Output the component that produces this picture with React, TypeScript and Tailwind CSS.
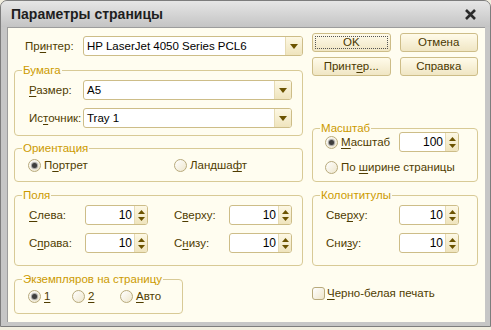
import type { ReactNode } from "react";

const font = { fontFamily: '"Liberation Sans", Arial, sans-serif' };

const U = ({ children }: { children: ReactNode }) => <span className="underline underline-offset-[2px]">{children}</span>;

const Group = ({
  title,
  className,
  inner,
  children,
}: {
  title: string;
  className: string;
  inner: string;
  children: ReactNode;
}) => (
  <fieldset className={`m-0 rounded-[4px] border border-[#d8ca96] p-0 ${className}`}>
    <legend className="ml-[7px] px-[1px] text-[11.5px] leading-[13px] text-[#cc9a00]">{title}</legend>
    <div className={inner}>{children}</div>
  </fieldset>
);

const Combo = ({ value, className }: { value: string; className: string }) => (
  <div className={`flex h-[20px] overflow-hidden rounded-[3px] border border-[#cdbd88] bg-white ${className}`}>
    <div className="flex-1 truncate pl-[3px] text-[11.5px] leading-[18px] text-black">{value}</div>
    <div className="flex w-[17px] items-center justify-center border-l border-[#e6dbb4] bg-gradient-to-b from-[#fdf8e4] to-[#efe4bd]">
      <svg width="8" height="5" viewBox="0 0 8 5">
        <path d="M0 0h8L4 5z" fill="#6b5300" />
      </svg>
    </div>
  </div>
);

const Spin = ({ value, className = "" }: { value: string; className?: string }) => (
  <div className={`flex h-[20px] overflow-hidden rounded-[3px] border border-[#cdbd88] bg-white ${className}`}>
    <div className="flex-1 pr-[2px] text-right text-[12px] leading-[18px] text-black">{value}</div>
    <div className="flex w-[13px] flex-col items-center justify-center gap-[3px] border-l border-[#e6dbb4] bg-gradient-to-b from-[#fdf8e4] to-[#efe4bd]">
      <svg width="7" height="4" viewBox="0 0 7 4">
        <path d="M0 4h7L3.5 0z" fill="#6b5300" />
      </svg>
      <svg width="7" height="4" viewBox="0 0 7 4">
        <path d="M0 0h7L3.5 4z" fill="#6b5300" />
      </svg>
    </div>
  </div>
);

const Radio = ({ checked, children }: { checked?: boolean; children: ReactNode }) => (
  <div className="flex items-center gap-[3px]">
    <div className="flex h-[13px] w-[13px] items-center justify-center rounded-full border border-[#b8aa7c] bg-gradient-to-br from-white to-[#eee6cc]">
      {checked && <div className="h-[5px] w-[5px] rounded-full bg-[#3d3d3d] shadow-[0_0_1px_1px_#9a9a9a]" />}
    </div>
    <span className="text-[11.5px] leading-[14px] text-[#4f3c00]">{children}</span>
  </div>
);

const Btn = ({ children, focus }: { children: ReactNode; focus?: boolean }) => (
  <div className="flex h-[19px] items-center justify-center rounded-[3px] border border-[#cdbd88] bg-gradient-to-b from-[#fffbea] to-[#f0e6c4] p-[2px]">
    <div
      className={`flex h-full w-full items-center justify-center text-[11.5px] leading-[13px] text-[#4a3800] ${
        focus ? "border border-dotted border-[#555]" : ""
      }`}
    >
      {children}
    </div>
  </div>
);

const Label = ({ children, className = "" }: { children: ReactNode; className?: string }) => (
  <span className={`text-[11.5px] leading-[14px] text-[#4f3c00] ${className}`}>{children}</span>
);

export default function App() {
  return (
    <div className="h-[330px] w-[491px] bg-[#f1eedf]" style={font}>
      <div className="flex h-[327px] w-[491px] flex-col rounded-t-[7px] border border-[#7d7d7d] bg-[#c6c6c6]">
        {/* title bar */}
        <div className="flex h-[26px] items-center justify-between rounded-t-[6px] bg-gradient-to-b from-[#e6e6e6] to-[#c4c4c4] pl-[10px] pr-[14px]">
          <span className="text-[14px] font-bold text-[#1e1e1e]">Параметры страницы</span>
          <svg width="11" height="11" viewBox="0 0 11 11">
            <path d="M1 1l9 9M10 1l-9 9" stroke="#2a2a2a" strokeWidth="2.6" />
          </svg>
        </div>

        {/* client area */}
        <div className="ml-[6px] flex h-[295px] w-[478px] flex-col border-l border-t border-[#9c9c9c] bg-[#fffdf0] px-[6px] pt-[4px]">
          {/* top section */}
          <div className="flex gap-[9px]">
            <div className="flex w-[289px] flex-col">
              <div className="mt-[4px] flex items-center pl-[11px]">
                <Label className="w-[58px]">
                  Пр<U>и</U>нтер:
                </Label>
                <Combo value="HP LaserJet 4050 Series PCL6" className="flex-1" />
              </div>
              <Group title="Бумага" className="mt-[8px] h-[72px]" inner="pl-[14px] pr-[10px]">
                <div className="mt-[3px] flex items-center">
                  <Label className="w-[54px]">
                    <U>Р</U>азмер:
                  </Label>
                  <Combo value="A5" className="flex-1" />
                </div>
                <div className="mt-[8px] flex items-center">
                  <Label className="w-[54px]">
                    Ис<U>т</U>очник:
                  </Label>
                  <Combo value="Tray 1" className="flex-1" />
                </div>
              </Group>
              <Group title="Ориентация" className="mt-[6px] h-[40px]" inner="pl-[13px]">
                <div className="mt-[3px] flex">
                  <div className="w-[146px]">
                    <Radio checked>
                      П<U>о</U>ртрет
                    </Radio>
                  </div>
                  <Radio>
                    Ландша<U>ф</U>т
                  </Radio>
                </div>
              </Group>
            </div>

            <div className="flex w-[166px] flex-col justify-between">
              <div className="mt-[1px] grid grid-cols-2 gap-x-[9px] gap-y-[5px]">
                <Btn focus>OK</Btn>
                <Btn>Отмена</Btn>
                <Btn>
                  Принт<U>е</U>р...
                </Btn>
                <Btn>Справка</Btn>
              </div>
              <Group title="Масштаб" className="h-[60px]" inner="-mt-[3px] pl-[12px]">
                <div className="flex items-center">
                  <div className="w-[74px]">
                    <Radio checked>
                      <U>М</U>асштаб
                    </Radio>
                  </div>
                  <Spin value="100" className="w-[60px]" />
                </div>
                <div className="mt-[8px]">
                  <Radio>
                    По <U>ш</U>ирине страницы
                  </Radio>
                </div>
              </Group>
            </div>
          </div>

          {/* middle row */}
          <div className="mt-[7px] flex gap-[9px]">
            <Group title="Поля" className="h-[77px] w-[289px]" inner="pl-[14px]">
              <div className="mt-[3px] grid grid-cols-[56px_63px_81px_63px] items-center gap-y-[8px]">
                <Label>
                  <U>С</U>лева:
                </Label>
                <Spin value="10" />
                <Label className="pl-[26px]">
                  С<U>в</U>ерху:
                </Label>
                <Spin value="10" />
                <Label>
                  С<U>п</U>рава:
                </Label>
                <Spin value="10" />
                <Label className="pl-[26px]">
                  С<U>н</U>изу:
                </Label>
                <Spin value="10" />
              </div>
            </Group>
            <Group title="Колонтитулы" className="h-[77px] w-[166px]" inner="pl-[13px]">
              <div className="mt-[3px] grid grid-cols-[73px_60px] items-center gap-y-[8px]">
                <Label>
                  Све<U>р</U>ху:
                </Label>
                <Spin value="10" />
                <Label>
                  Сни<U>з</U>у:
                </Label>
                <Spin value="10" />
              </div>
            </Group>
          </div>

          {/* bottom row */}
          <div className="mt-[7px] flex gap-[9px]">
            <Group title="Экземпляров на страницу" className="h-[41px] w-[169px]" inner="pl-[13px]">
              <div className="mt-[3px] flex">
                <div className="w-[44px]">
                  <Radio checked>
                    <U>1</U>
                  </Radio>
                </div>
                <div className="w-[48px]">
                  <Radio>
                    <U>2</U>
                  </Radio>
                </div>
                <Radio>
                  <U>А</U>вто
                </Radio>
              </div>
            </Group>
            <div className="ml-[120px] mt-[13px] flex h-[14px] items-center gap-[2px]">
              <div className="h-[13px] w-[13px] rounded-[3px] border border-[#b8aa7c] bg-gradient-to-br from-white to-[#eee6cc]" />
              <Label>
                <U>Ч</U>ерно-белая печать
              </Label>
            </div>
          </div>
        </div>
      </div>
    </div>
  );
}
